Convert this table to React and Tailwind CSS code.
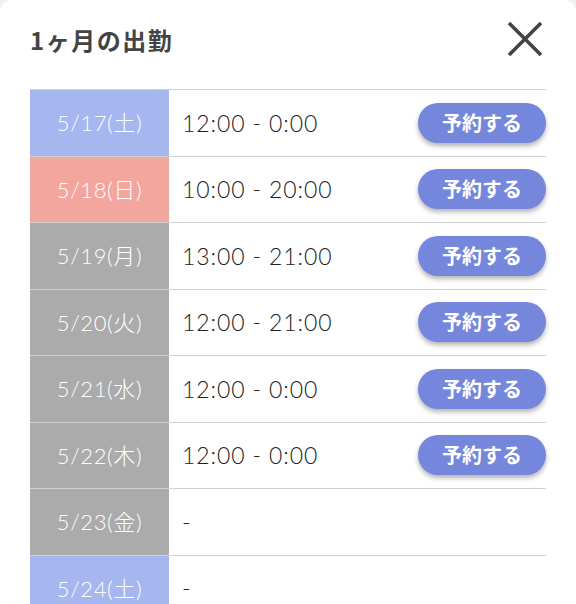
import React from "react";

const rows = [
  { date: "5/17(土)", kind: "sat", time: "12:00 - 0:00", book: true },
  { date: "5/18(日)", kind: "sun", time: "10:00 - 20:00", book: true },
  { date: "5/19(月)", kind: "day", time: "13:00 - 21:00", book: true },
  { date: "5/20(火)", kind: "day", time: "12:00 - 21:00", book: true },
  { date: "5/21(水)", kind: "day", time: "12:00 - 0:00", book: true },
  { date: "5/22(木)", kind: "day", time: "12:00 - 0:00", book: true },
  { date: "5/23(金)", kind: "day", time: "-", book: false },
  { date: "5/24(土)", kind: "sat", time: "-", book: false },
];

const dateBg = {
  sat: "bg-[#a6b6ef]",
  sun: "bg-[#f2a69d]",
  day: "bg-[#ababab]",
};

const jp = { fontFamily: "'Noto Sans CJK JP', sans-serif" };

export default function App() {
  return (
    <div
      className="h-[604px] w-[576px] overflow-hidden bg-[#f2f2f2]"
      style={{ fontFamily: "Lato, 'Noto Sans CJK JP', sans-serif" }}>
      <div className="h-full bg-white rounded-t-[12px] px-[30px]">
        <div className="flex items-center justify-between h-[89px] pb-[10px]">
          <h1 className="text-[24px] font-bold text-[#444] tracking-[1.5px]" style={jp}>
            1ヶ月の出勤
          </h1>
          <button className="mr-[2px] mb-[2px]">
            <svg width="38" height="38" viewBox="0 0 38 38">
              <path d="M3 3 L35 35 M35 3 L3 35" stroke="#444" strokeWidth="3.6" />
            </svg>
          </button>
        </div>
        <div className="border-t border-[#d2d2d2]">
          {rows.map((r) => (
            <div key={r.date} className="flex h-[66.5px] border-b border-[#d2d2d2]">
              <div
                className={`w-[139px] shrink-0 flex items-center justify-center text-white text-[22px] font-light tracking-[0.6px] ${dateBg[r.kind]}`}>
                {r.date}
              </div>
              <div className="flex-1 flex items-center justify-between pl-[13px]">
                <span className="text-[23px] font-light text-[#222] tracking-[0.9px]">
                  {r.time}
                </span>
                {r.book && (
                  <button
                    className="w-[128px] h-[40px] rounded-full bg-[#7586dd] text-white text-[20px] font-bold shadow-[0_3px_5px_rgba(0,0,0,0.3)]"
                    style={jp}>
                    予約する
                  </button>
                )}
              </div>
            </div>
          ))}
        </div>
      </div>
    </div>
  );
}
